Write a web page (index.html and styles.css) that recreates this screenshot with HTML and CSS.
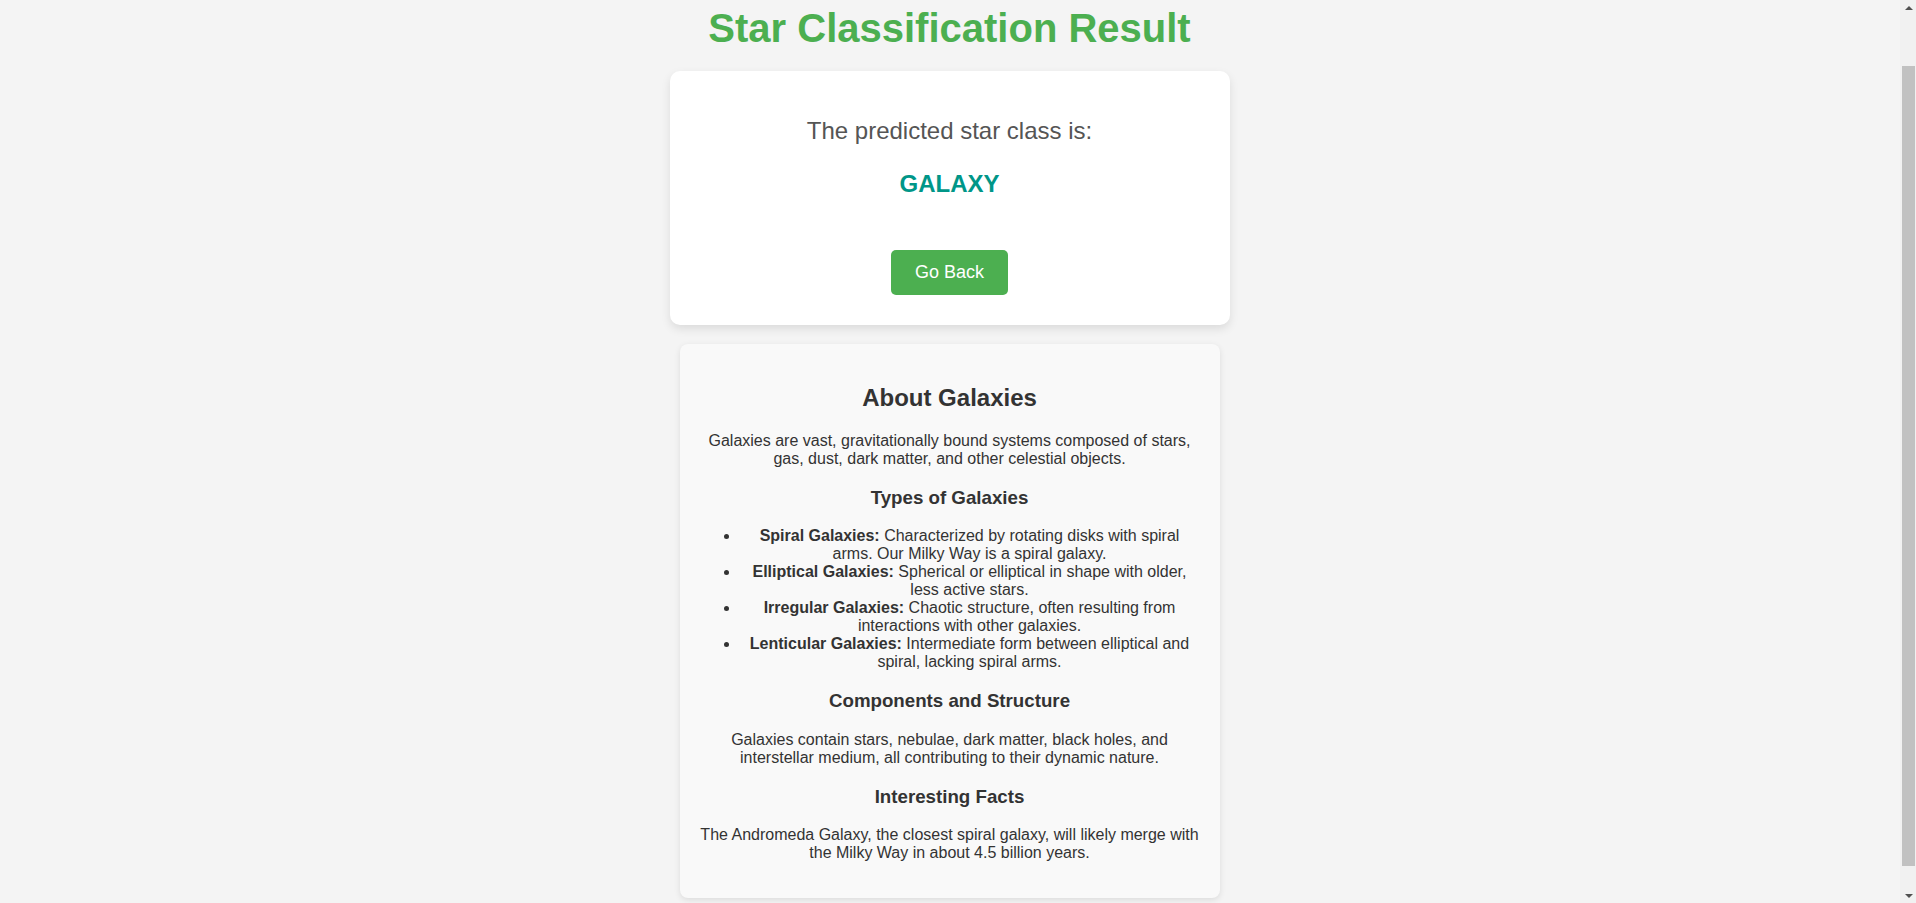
FILE: index.html
```html
<!DOCTYPE html>
<html lang="en">
<head>
<meta charset="utf-8">
<title>Star Classification Result</title>
<link rel="stylesheet" href="styles.css">
</head>
<body>
<div class="page">
  <h1 class="title">Star Classification Result</h1>
  <div class="result-card">
    <p class="lead">The predicted star class is:</p>
    <h2 class="result">GALAXY</h2>
    <div class="actions">
      <a class="back-btn" href="#">Go Back</a>
    </div>
  </div>
  <div class="info-card">
    <h2>About Galaxies</h2>
    <p>Galaxies are vast, gravitationally bound systems composed of stars, gas, dust, dark matter, and other celestial objects.</p>
    <h3>Types of Galaxies</h3>
    <ul>
      <li><strong>Spiral Galaxies:</strong> Characterized by rotating disks with spiral arms. Our Milky Way is a spiral galaxy.</li>
      <li><strong>Elliptical Galaxies:</strong> Spherical or elliptical in shape with older, less active stars.</li>
      <li><strong>Irregular Galaxies:</strong> Chaotic structure, often resulting from interactions with other galaxies.</li>
      <li><strong>Lenticular Galaxies:</strong> Intermediate form between elliptical and spiral, lacking spiral arms.</li>
    </ul>
    <h3>Components and Structure</h3>
    <p>Galaxies contain stars, nebulae, dark matter, black holes, and interstellar medium, all contributing to their dynamic nature.</p>
    <h3>Interesting Facts</h3>
    <p>The Andromeda Galaxy, the closest spiral galaxy, will likely merge with the Milky Way in about 4.5 billion years.</p>
  </div>
</div>
<div class="scrollbar" aria-hidden="true">
  <div class="sb-btn"><span class="sb-arrow up"></span></div>
  <div class="sb-track"><div class="sb-thumb"></div></div>
  <div class="sb-btn"><span class="sb-arrow down"></span></div>
</div>
</body>
</html>
```

FILE: styles.css
```css
html, body {
  margin: 0;
  padding: 0;
}
body {
  background: #f4f4f4;
  font-family: "Liberation Sans", Arial, sans-serif;
  color: #333;
  padding-right: 17px;
  height: 903px;
  overflow: hidden;
}
.page {
  display: flex;
  flex-direction: column;
  align-items: center;
  text-align: center;
  padding: 6px 20px 27px;
}
.title {
  margin: 0 0 20px;
  font-size: 40px;
  font-weight: bold;
  color: #4caf50;
}
.result-card {
  box-sizing: border-box;
  width: 560px;
  padding: 20px;
  background: #ffffff;
  border-radius: 10px;
  box-shadow: 0 4px 10px rgba(0, 0, 0, 0.1);
}
.lead {
  margin: 26px 0 0;
  font-size: 24px;
  color: #555;
}
.result {
  margin: 25px 0 0;
  font-size: 24px;
  font-weight: bold;
  color: #009688;
}
.actions {
  display: flex;
  justify-content: center;
  margin: 52px 0 10px;
}
.back-btn {
  display: inline-block;
  padding: 12px 24px;
  background: #4caf50;
  color: #ffffff;
  font-size: 18px;
  text-decoration: none;
  border-radius: 5px;
}
.info-card {
  box-sizing: border-box;
  width: 540px;
  margin-top: 19px;
  padding: 20px;
  background: #f9f9f9;
  border-radius: 8px;
  box-shadow: 0 2px 6px rgba(0, 0, 0, 0.1);
}
.info-card h2 {
  font-size: 24px;
  margin: 20px 0;
}
.info-card h3 {
  font-size: 18.72px;
  margin: 18.72px 0;
}
.info-card p {
  margin: 16px 0;
}
.info-card ul {
  margin: 16px 0;
  padding-left: 40px;
}

/* scrollbar drawn over the right edge, as in the reference */
.scrollbar {
  position: fixed;
  top: 0;
  right: 0;
  width: 16px;
  height: 903px;
  background: #f1f1f1;
  display: flex;
  flex-direction: column;
}
.sb-btn {
  height: 17px;
  display: flex;
  align-items: center;
  justify-content: center;
}
.sb-arrow {
  width: 0;
  height: 0;
  border-left: 4px solid transparent;
  border-right: 4px solid transparent;
  margin-left: 2px;
}
.sb-arrow.up {
  border-bottom: 4px solid #505050;
  margin-top: -2px;
}
.sb-arrow.down {
  border-top: 4px solid #505050;
  margin-top: 2px;
}
.sb-track {
  flex: 1;
  padding-top: 49px;
}
.sb-thumb {
  height: 800px;
  margin: 0 1px 0 2px;
  background: #c1c1c1;
}
```
